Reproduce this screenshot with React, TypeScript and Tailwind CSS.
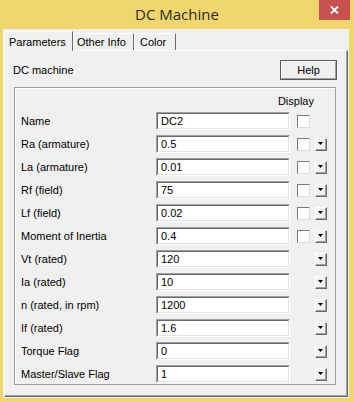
const rows = [
  { label: 'Name', value: 'DC2', check: true, drop: false },
  { label: 'Ra (armature)', value: '0.5', check: true, drop: true },
  { label: 'La (armature)', value: '0.01', check: true, drop: true },
  { label: 'Rf (field)', value: '75', check: true, drop: true },
  { label: 'Lf (field)', value: '0.02', check: true, drop: true },
  { label: 'Moment of Inertia', value: '0.4', check: true, drop: true },
  { label: 'Vt (rated)', value: '120', check: false, drop: true },
  { label: 'Ia (rated)', value: '10', check: false, drop: true },
  { label: 'n (rated, in rpm)', value: '1200', check: false, drop: true },
  { label: 'If (rated)', value: '1.6', check: false, drop: true },
  { label: 'Torque Flag', value: '0', check: false, drop: true },
  { label: 'Master/Slave Flag', value: '1', check: false, drop: true },
]

const ui = { fontFamily: '"Liberation Sans", Arial, sans-serif' }

const Field = ({ value }: { value: string }) => (
  <div className="w-[134px] h-[18px] border-t border-l border-t-[#a0a0a0] border-l-[#a0a0a0] border-b border-r border-b-white border-r-white">
    <div className="h-full border-t border-l border-t-[#696969] border-l-[#696969] border-b border-r border-b-[#e3e3e3] border-r-[#e3e3e3] bg-white flex items-center pl-[3px] text-[11px] text-black">
      {value}
    </div>
  </div>
)

const Check = () => (
  <div className="w-[13px] h-[13px] border-t border-l border-t-[#7a7a7a] border-l-[#7a7a7a] border-b border-r border-b-[#dcdcdc] border-r-[#dcdcdc] bg-white" />
)

const DropButton = () => (
  <div className="w-[12px] h-[13px] border-t border-l border-t-white border-l-white border-b border-r border-b-[#696969] border-r-[#696969] bg-[#f0f0f0]">
    <div className="w-full h-full border-b border-r border-b-[#a0a0a0] border-r-[#a0a0a0] flex items-center justify-center">
      <svg width="5" height="3" viewBox="0 0 5 3">
        <path d="M0 0h5L2.5 3z" fill="#000" />
      </svg>
    </div>
  </div>
)

export default function App() {
  return (
    <div className="w-[354px] h-[402px] bg-[#f0d66c] flex flex-col" style={ui}>
      <div className="h-[29px] grid grid-cols-[1fr_auto_1fr]">
        <div />
        <div
          className="flex items-center text-[15px] text-[#2b2b2b] pb-[1px]"
          style={{ fontFamily: '"Open Sans", "Noto Sans", sans-serif' }}
        >
          DC Machine
        </div>
        <div className="flex justify-end items-start pr-[4px]">
          <div className="w-[31px] h-[20px] bg-[#c75050] flex items-center justify-center">
            <svg width="9" height="8" viewBox="0 0 9 8">
              <path d="M1 0.5l7 7M8 0.5l-7 7" stroke="#fff" strokeWidth="1.8" />
            </svg>
          </div>
        </div>
      </div>

      <div className="flex-1 ml-[3px] mr-[5px] mb-[4px] bg-[#f0f0f0] flex flex-col pt-[2px] pl-[1px] pr-[1px] pb-[1px]">
        <div className="flex items-end h-[19px] text-[11px] text-black">
          <div className="relative z-10 -mb-[1px] w-[69px] h-[20px] bg-[#f0f0f0] border-t border-l border-t-white border-l-white border-r border-r-[#696969] flex items-start pt-[2px] pl-[4px]">
            Parameters
          </div>
          <div className="w-[61px] h-[17px] border-t border-l border-t-white border-l-white border-r border-r-[#696969] flex items-center pl-[3px]">
            Other Info
          </div>
          <div className="w-[42px] h-[17px] border-t border-l border-t-white border-l-white border-r border-r-[#696969] flex items-center pl-[5px]">
            Color
          </div>
        </div>

        <div className="flex-1 border-t border-l border-t-white border-l-white border-b border-r border-b-[#696969] border-r-[#696969]">
          <div className="h-full border-b border-r border-b-[#a0a0a0] border-r-[#a0a0a0] flex flex-col">
            <div className="flex justify-between items-center pl-[8px] pr-[9px] pt-[9px] text-[11px] text-black">
              <span>DC machine</span>
              <div className="w-[57px] h-[20px] border border-[#5a5a5a]">
                <div className="w-full h-full border-t border-l border-t-white border-l-white border-b border-r border-b-[#a0a0a0] border-r-[#a0a0a0] bg-[#f0f0f0] flex items-center justify-center">
                  Help
                </div>
              </div>
            </div>

            <div className="mt-[7px] ml-[9px] mr-[10px] h-[298px] border border-[#a0a0a0] shadow-[inset_1px_1px_0_#fff]">
              <div className="pt-[6px] pl-[6px] text-[11px] text-black">
                <div className="h-[14px] flex justify-end items-center pr-[21px]">Display</div>
                <div className="mt-[4px] flex flex-col">
                  {rows.map((row, i) => (
                    <div key={i} className="h-[18px] mb-[5px] flex items-center">
                      <span className="w-[135px]">{row.label}</span>
                      <Field value={row.value} />
                      <div className="w-[13px] ml-[7px]">{row.check && <Check />}</div>
                      <div className="w-[12px] ml-[5px]">{row.drop && <DropButton />}</div>
                    </div>
                  ))}
                </div>
              </div>
            </div>
          </div>
        </div>
      </div>
    </div>
  )
}
